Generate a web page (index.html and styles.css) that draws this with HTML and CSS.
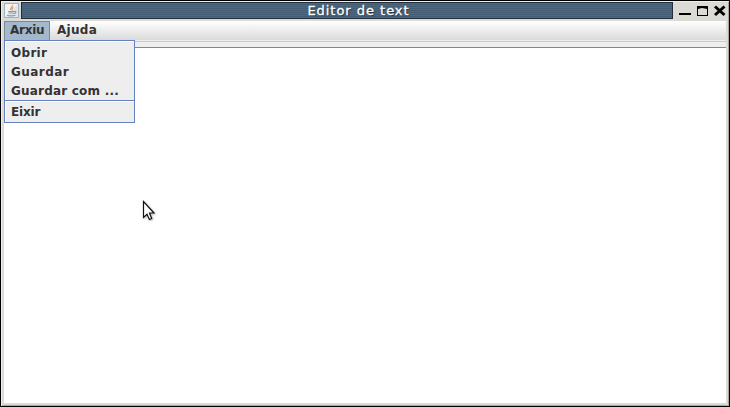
FILE: index.html
```html
<!DOCTYPE html>
<html lang="ca">
<head>
<meta charset="utf-8">
<title>Editor de text</title>
<link rel="stylesheet" href="styles.css">
</head>
<body>
<div class="window">
  <header class="titlebar">
    <svg class="app-icon" width="15" height="15" viewBox="0 0 15 15">
      <rect x=".5" y=".5" width="14" height="14" fill="#dfe6ec" stroke="#a3b1bd"/>
      <path d="M1 1H14L1 14Z" fill="#f1f4f6"/>
      <path d="M8.5 2C9.5 4 5.5 4.5 6.5 7M9.5 4.5C7 5.5 8.5 6 7.8 7.5" fill="none" stroke="#e9a061" stroke-width="1.3"/>
      <path d="M4 8.5H10M4.5 10H9.5M10 8.5C13 8 12 10.5 9.5 10.7M3 12.3C6 13.3 9 13 11.5 12.2" fill="none" stroke="#7e9cb8" stroke-width="1.2"/>
    </svg>
    <h1 class="title">Editor de text</h1>
    <svg class="controls" width="53" height="20" viewBox="0 0 53 20">
      <rect x="6" y="12" width="12" height="2"/>
      <path d="M24 5H35V15H24ZM25 8V14H34V8L29 7Z" fill-rule="evenodd"/>
      <path d="M42 5.5L51.5 14M51.5 5.5L42 14" stroke="#000" stroke-width="3"/>
    </svg>
  </header>
  <main class="content">
    <nav class="menubar">
      <span class="menu-title active">Arxiu</span>
      <span class="menu-title">Ajuda</span>
    </nav>
    <div class="toolbar"></div>
    <div class="document"></div>
    <div class="dropdown">
      <div class="item">Obrir</div>
      <div class="item wide">Guardar</div>
      <div class="item narrow">Guardar com ...</div>
      <div class="separator"></div>
      <div class="item tight">Eixir</div>
    </div>
  </main>
  <svg class="cursor" width="16" height="24" viewBox="0 0 16 24">
    <path d="M1.5 1.5V17.5L5 14.3L7.4 19.5L9.7 18.5L7.5 13H12Z" fill="#fff" stroke="#111" stroke-width="1.2"/>
  </svg>
</div>
</body>
</html>
```
FILE: styles.css
```css
* { box-sizing: border-box; }

body {
  margin: 0;
  font-family: "DejaVu Sans", sans-serif;
  overflow: hidden;
}

.window {
  position: relative;
  display: flex;
  flex-direction: column;
  width: 730px;
  height: 407px;
  padding: 0 2px 3px;
  border: 1px solid #000;
  background: #dcdad5;
  box-shadow: inset 1px 1px #f4eded, inset -1px -1px #aaa69f;
}

.titlebar {
  display: flex;
  flex: 0 0 20px;
  height: 20px;
}

.app-icon {
  margin: 2px 2px 0 1px;
}

.title {
  width: 652px;
  height: 17px;
  margin: 1px 0 0;
  padding-left: 23px;
  border: 1px solid #1e2e3c;
  background: repeating-linear-gradient(#4b6983 0 1px, #425d74 1px 2px);
  color: #fff;
  font-size: 13px;
  font-weight: 400;
  line-height: 15px;
  letter-spacing: 0.97px;
  text-align: center;
  text-shadow: 1px 1px 1px #1e2e3c;
  -webkit-text-stroke: 0.3px #fff;
}

.controls { flex: none; }

.content {
  position: relative;
  display: flex;
  flex: 1;
  flex-direction: column;
  margin: 0 1px;
  background: #fff;
}

.menubar {
  display: flex;
  height: 21px;
  border-bottom: 1px solid #ccc;
  background: linear-gradient(#fff, #dadada 19px, #eee 19px);
}

.menu-title {
  height: 20px;
  padding-left: 7px;
  color: #333;
  font-size: 12px;
  font-weight: 700;
  line-height: 19px;
  letter-spacing: 0.3px;
}

.active {
  width: 46px;
  padding-left: 5px;
  border: 1px solid #7a8a99;
  background: #a3b8cc;
  line-height: 17px;
  letter-spacing: -0.25px;
}

.toolbar {
  height: 6px;
  border-bottom: 1px solid #7a8a99;
  background: #eee;
}

.document { flex: 1; }

.dropdown {
  position: absolute;
  top: 19px;
  left: 0;
  width: 131px;
  height: 83px;
  padding: 2px 0 0 6px;
  border: 1px solid #6382bf;
  background: #eee;
  box-shadow: inset 1px 1px #fff;
}

.item {
  height: 19px;
  color: #333;
  font-size: 12px;
  font-weight: 700;
  line-height: 20px;
  letter-spacing: 0.3px;
  white-space: nowrap;
}

.wide { letter-spacing: 0.45px; }
.narrow { letter-spacing: 0.2px; }
.tight { letter-spacing: -0.15px; }

.separator {
  height: 2px;
  margin-left: -6px;
  border-top: 1px solid #6382bf;
  border-bottom: 1px solid #fff;
}

.cursor {
  position: absolute;
  top: 199px;
  left: 141px;
  filter: drop-shadow(1px 1px 1px #0004);
}
```
